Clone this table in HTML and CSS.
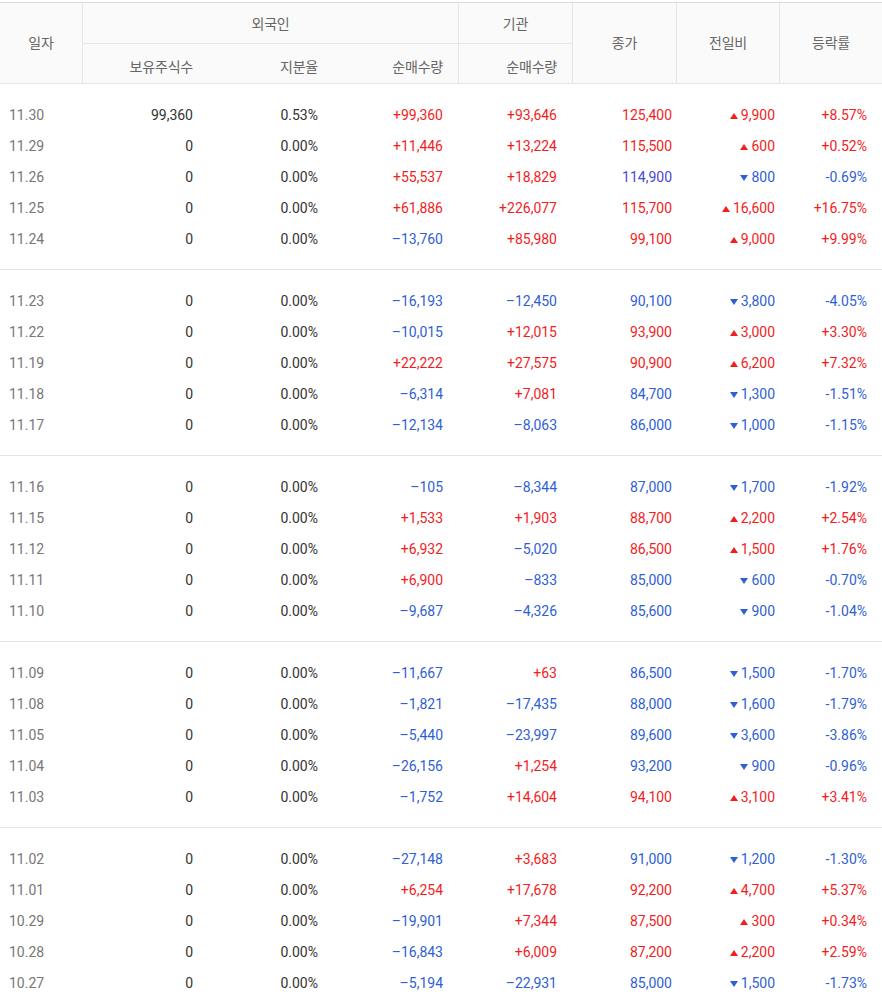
FILE: index.html
```html
<!DOCTYPE html>
<html lang="ko">
<head>
<meta charset="utf-8">
<title>외국인·기관 매매동향</title>
<link rel="stylesheet" href="styles.css">
</head>
<body>
<div class="board">
  <div class="head">
    <div class="h h-date">일자</div>
    <div class="h h-frgn">외국인</div>
    <div class="h h-inst">기관</div>
    <div class="h h-close">종가</div>
    <div class="h h-diff">전일비</div>
    <div class="h h-rate">등락률</div>
    <div class="h sub s-hold">보유주식수</div>
    <div class="h sub s-ratio">지분율</div>
    <div class="h sub s-fnet">순매수량</div>
    <div class="h sub s-inet">순매수량</div>
  </div>

  <div class="group">
    <div class="row"><span class="c date">11.30</span><span class="c num">99,360</span><span class="c num">0.53%</span><span class="c num r">+99,360</span><span class="c num r">+93,646</span><span class="c num tight r">125,400</span><span class="c num tight r"><i class="up"></i>9,900</span><span class="c num r">+8.57%</span></div>
    <div class="row"><span class="c date">11.29</span><span class="c num">0</span><span class="c num">0.00%</span><span class="c num r">+11,446</span><span class="c num r">+13,224</span><span class="c num tight r">115,500</span><span class="c num tight r"><i class="up"></i>600</span><span class="c num r">+0.52%</span></div>
    <div class="row"><span class="c date">11.26</span><span class="c num">0</span><span class="c num">0.00%</span><span class="c num r">+55,537</span><span class="c num r">+18,829</span><span class="c num tight v">114,900</span><span class="c num tight f"><i class="dn"></i>800</span><span class="c num f">-0.69%</span></div>
    <div class="row"><span class="c date">11.25</span><span class="c num">0</span><span class="c num">0.00%</span><span class="c num r">+61,886</span><span class="c num r">+226,077</span><span class="c num tight r">115,700</span><span class="c num tight r"><i class="up"></i>16,600</span><span class="c num r">+16.75%</span></div>
    <div class="row"><span class="c date">11.24</span><span class="c num">0</span><span class="c num">0.00%</span><span class="c num f">–13,760</span><span class="c num r">+85,980</span><span class="c num tight r">99,100</span><span class="c num tight r"><i class="up"></i>9,000</span><span class="c num r">+9.99%</span></div>
  </div>

  <div class="group">
    <div class="row"><span class="c date">11.23</span><span class="c num">0</span><span class="c num">0.00%</span><span class="c num f">–16,193</span><span class="c num f">–12,450</span><span class="c num tight f">90,100</span><span class="c num tight f"><i class="dn"></i>3,800</span><span class="c num f">-4.05%</span></div>
    <div class="row"><span class="c date">11.22</span><span class="c num">0</span><span class="c num">0.00%</span><span class="c num f">–10,015</span><span class="c num r">+12,015</span><span class="c num tight r">93,900</span><span class="c num tight r"><i class="up"></i>3,000</span><span class="c num r">+3.30%</span></div>
    <div class="row"><span class="c date">11.19</span><span class="c num">0</span><span class="c num">0.00%</span><span class="c num r">+22,222</span><span class="c num r">+27,575</span><span class="c num tight r">90,900</span><span class="c num tight r"><i class="up"></i>6,200</span><span class="c num r">+7.32%</span></div>
    <div class="row"><span class="c date">11.18</span><span class="c num">0</span><span class="c num">0.00%</span><span class="c num f">–6,314</span><span class="c num r">+7,081</span><span class="c num tight f">84,700</span><span class="c num tight f"><i class="dn"></i>1,300</span><span class="c num f">-1.51%</span></div>
    <div class="row"><span class="c date">11.17</span><span class="c num">0</span><span class="c num">0.00%</span><span class="c num f">–12,134</span><span class="c num f">–8,063</span><span class="c num tight f">86,000</span><span class="c num tight f"><i class="dn"></i>1,000</span><span class="c num f">-1.15%</span></div>
  </div>

  <div class="group">
    <div class="row"><span class="c date">11.16</span><span class="c num">0</span><span class="c num">0.00%</span><span class="c num f">–105</span><span class="c num f">–8,344</span><span class="c num tight f">87,000</span><span class="c num tight f"><i class="dn"></i>1,700</span><span class="c num f">-1.92%</span></div>
    <div class="row"><span class="c date">11.15</span><span class="c num">0</span><span class="c num">0.00%</span><span class="c num r">+1,533</span><span class="c num r">+1,903</span><span class="c num tight r">88,700</span><span class="c num tight r"><i class="up"></i>2,200</span><span class="c num r">+2.54%</span></div>
    <div class="row"><span class="c date">11.12</span><span class="c num">0</span><span class="c num">0.00%</span><span class="c num r">+6,932</span><span class="c num f">–5,020</span><span class="c num tight r">86,500</span><span class="c num tight r"><i class="up"></i>1,500</span><span class="c num r">+1.76%</span></div>
    <div class="row"><span class="c date">11.11</span><span class="c num">0</span><span class="c num">0.00%</span><span class="c num r">+6,900</span><span class="c num f">–833</span><span class="c num tight f">85,000</span><span class="c num tight f"><i class="dn"></i>600</span><span class="c num f">-0.70%</span></div>
    <div class="row"><span class="c date">11.10</span><span class="c num">0</span><span class="c num">0.00%</span><span class="c num f">–9,687</span><span class="c num f">–4,326</span><span class="c num tight f">85,600</span><span class="c num tight f"><i class="dn"></i>900</span><span class="c num f">-1.04%</span></div>
  </div>

  <div class="group">
    <div class="row"><span class="c date">11.09</span><span class="c num">0</span><span class="c num">0.00%</span><span class="c num f">–11,667</span><span class="c num r">+63</span><span class="c num tight f">86,500</span><span class="c num tight f"><i class="dn"></i>1,500</span><span class="c num f">-1.70%</span></div>
    <div class="row"><span class="c date">11.08</span><span class="c num">0</span><span class="c num">0.00%</span><span class="c num f">–1,821</span><span class="c num f">–17,435</span><span class="c num tight f">88,000</span><span class="c num tight f"><i class="dn"></i>1,600</span><span class="c num f">-1.79%</span></div>
    <div class="row"><span class="c date">11.05</span><span class="c num">0</span><span class="c num">0.00%</span><span class="c num f">–5,440</span><span class="c num f">–23,997</span><span class="c num tight f">89,600</span><span class="c num tight f"><i class="dn"></i>3,600</span><span class="c num f">-3.86%</span></div>
    <div class="row"><span class="c date">11.04</span><span class="c num">0</span><span class="c num">0.00%</span><span class="c num f">–26,156</span><span class="c num r">+1,254</span><span class="c num tight f">93,200</span><span class="c num tight f"><i class="dn"></i>900</span><span class="c num f">-0.96%</span></div>
    <div class="row"><span class="c date">11.03</span><span class="c num">0</span><span class="c num">0.00%</span><span class="c num f">–1,752</span><span class="c num r">+14,604</span><span class="c num tight r">94,100</span><span class="c num tight r"><i class="up"></i>3,100</span><span class="c num r">+3.41%</span></div>
  </div>

  <div class="group">
    <div class="row"><span class="c date">11.02</span><span class="c num">0</span><span class="c num">0.00%</span><span class="c num f">–27,148</span><span class="c num r">+3,683</span><span class="c num tight f">91,000</span><span class="c num tight f"><i class="dn"></i>1,200</span><span class="c num f">-1.30%</span></div>
    <div class="row"><span class="c date">11.01</span><span class="c num">0</span><span class="c num">0.00%</span><span class="c num r">+6,254</span><span class="c num r">+17,678</span><span class="c num tight r">92,200</span><span class="c num tight r"><i class="up"></i>4,700</span><span class="c num r">+5.37%</span></div>
    <div class="row"><span class="c date">10.29</span><span class="c num">0</span><span class="c num">0.00%</span><span class="c num f">–19,901</span><span class="c num r">+7,344</span><span class="c num tight r">87,500</span><span class="c num tight r"><i class="up"></i>300</span><span class="c num r">+0.34%</span></div>
    <div class="row"><span class="c date">10.28</span><span class="c num">0</span><span class="c num">0.00%</span><span class="c num f">–16,843</span><span class="c num r">+6,009</span><span class="c num tight r">87,200</span><span class="c num tight r"><i class="up"></i>2,200</span><span class="c num r">+2.59%</span></div>
    <div class="row"><span class="c date">10.27</span><span class="c num">0</span><span class="c num">0.00%</span><span class="c num f">–5,194</span><span class="c num f">–22,931</span><span class="c num tight f">85,000</span><span class="c num tight f"><i class="dn"></i>1,500</span><span class="c num f">-1.73%</span></div>
  </div>
</div>
</body>
</html>
```

FILE: styles.css
```css
* { box-sizing: border-box; }

html, body {
  margin: 0;
  padding: 0;
  background: #fff;
}

body {
  font-family: Roboto, "Noto Sans CJK KR", "Noto Sans", sans-serif;
  font-size: 14px;
  color: #333;
}

.board {
  width: 882px;
  padding-top: 2px;
}

.head {
  display: grid;
  grid-template-columns: 82px 126px 125px 125px 114px 104px 103px 103px;
  grid-template-rows: 41px 39px;
  background: #fafafa;
  border-top: 1px solid #dcdcdc;
  border-bottom: 1px solid #e5e5e5;
}

.h {
  display: flex;
  align-items: center;
  justify-content: center;
  color: #666;
  font-family: "Noto Sans CJK KR", "Noto Sans", sans-serif;
  font-size: 14px;
  letter-spacing: -0.2px;
}

.h-date  { grid-column: 1; grid-row: 1 / 3; padding-bottom: 2px; }
.h-frgn  { grid-column: 2 / 5; grid-row: 1; border-left: 1px solid #e5e5e5; border-bottom: 1px solid #e5e5e5; }
.h-inst  { grid-column: 5; grid-row: 1; border-left: 1px solid #e5e5e5; border-bottom: 1px solid #e5e5e5; }
.h-close { grid-column: 6; grid-row: 1 / 3; border-left: 1px solid #e5e5e5; padding-bottom: 2px; }
.h-diff  { grid-column: 7; grid-row: 1 / 3; border-left: 1px solid #e5e5e5; padding-bottom: 2px; }
.h-rate  { grid-column: 8; grid-row: 1 / 3; border-left: 1px solid #e5e5e5; padding-bottom: 2px; }

.sub {
  grid-row: 2;
  justify-content: flex-end;
  padding-right: 15px;
  padding-top: 4px;
}
.s-hold  { grid-column: 2; border-left: 1px solid #e5e5e5; }
.s-ratio { grid-column: 3; }
.s-fnet  { grid-column: 4; }
.s-inet  { grid-column: 5; border-left: 1px solid #e5e5e5; }

.group {
  padding: 16px 0 14px;
  border-bottom: 1px solid #e5e5e5;
}

.row {
  display: grid;
  grid-template-columns: 82px 126px 125px 125px 114px 104px 103px 103px;
  height: 31px;
  line-height: 31px;
}

.c {
  display: block;
  white-space: nowrap;
}

.date {
  padding-left: 9px;
  color: #777;
}

.num {
  text-align: right;
  padding-right: 15px;
  color: #333;
}

.num.tight { padding-right: 4px; }

.r { color: #f21d1d; }
.f { color: #2f5fd6; }
.v { color: #4a47d2; }

.up, .dn {
  display: inline-block;
  width: 0;
  height: 0;
  margin-right: 3px;
  border-left: 4px solid transparent;
  border-right: 4px solid transparent;
  vertical-align: 1px;
}
.up { border-bottom: 6px solid #f21d1d; }
.dn { border-top: 6px solid #2f5fd6; }
```
